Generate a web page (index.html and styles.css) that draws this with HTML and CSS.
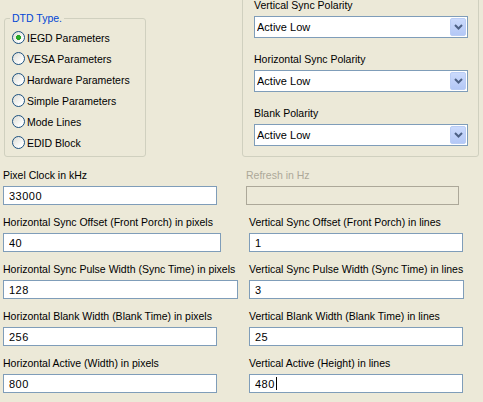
FILE: index.html
```html
<!DOCTYPE html>
<html lang="en">
<head>
  <meta charset="UTF-8">
  <title>DTD Settings</title>
  <link rel="stylesheet" href="styles.css">
</head>
<body>
  <div class="top">
    <fieldset class="group dtd">
      <legend>DTD Type.</legend>
      <label class="radio"><input type="radio" name="dtd" checked> IEGD Parameters</label>
      <label class="radio"><input type="radio" name="dtd"> VESA Parameters</label>
      <label class="radio"><input type="radio" name="dtd"> Hardware Parameters</label>
      <label class="radio"><input type="radio" name="dtd"> Simple Parameters</label>
      <label class="radio"><input type="radio" name="dtd"> Mode Lines</label>
      <label class="radio"><input type="radio" name="dtd"> EDID Block</label>
    </fieldset>

    <div class="group polarity">
      <div class="pick">
        <label>Vertical Sync Polarity</label>
        <div class="combo">
          <select><option>Active Low</option><option>Active High</option></select>
          <span class="drop"><svg width="9" height="6" viewBox="0 0 9 6"><path d="M1 1l3.5 3.5L8 1" fill="none" stroke="#4d6185" stroke-width="2"/></svg></span>
        </div>
      </div>
      <div class="pick">
        <label>Horizontal Sync Polarity</label>
        <div class="combo">
          <select><option>Active Low</option><option>Active High</option></select>
          <span class="drop"><svg width="9" height="6" viewBox="0 0 9 6"><path d="M1 1l3.5 3.5L8 1" fill="none" stroke="#4d6185" stroke-width="2"/></svg></span>
        </div>
      </div>
      <div class="pick">
        <label>Blank Polarity</label>
        <div class="combo">
          <select><option>Active Low</option><option>Active High</option></select>
          <span class="drop"><svg width="9" height="6" viewBox="0 0 9 6"><path d="M1 1l3.5 3.5L8 1" fill="none" stroke="#4d6185" stroke-width="2"/></svg></span>
        </div>
      </div>
    </div>
  </div>

  <div class="params">
    <div class="field">
      <label>Pixel Clock in kHz</label>
      <input type="text" class="w214" value="33000">
    </div>
    <div class="field off">
      <label>Refresh in Hz</label>
      <input type="text" class="w213" disabled>
    </div>

    <div class="field">
      <label>Horizontal Sync Offset (Front Porch) in pixels</label>
      <input type="text" class="w218" value="40">
    </div>
    <div class="field indent">
      <label>Vertical Sync Offset (Front Porch) in lines</label>
      <input type="text" class="w214" value="1">
    </div>

    <div class="field">
      <label>Horizontal Sync Pulse Width (Sync Time) in pixels</label>
      <input type="text" class="w235" value="128">
    </div>
    <div class="field indent">
      <label>Vertical Sync Pulse Width (Sync Time) in lines</label>
      <input type="text" class="w215" value="3">
    </div>

    <div class="field">
      <label>Horizontal Blank Width (Blank Time) in pixels</label>
      <input type="text" class="w214" value="256">
    </div>
    <div class="field indent">
      <label>Vertical Blank Width (Blank Time) in lines</label>
      <input type="text" class="w214" value="25">
    </div>

    <div class="field">
      <label>Horizontal Active (Width) in pixels</label>
      <input type="text" class="w214" value="800">
    </div>
    <div class="field indent">
      <label>Vertical Active (Height) in lines</label>
      <span class="caret-box">
        <input type="text" class="w214" value="480">
        <span class="caret"></span>
      </span>
    </div>
  </div>
</body>
</html>
```

FILE: styles.css
```css
body {
  margin: 0;
  background-color: #ece9d8;
  color: #000;
  font-family: "Liberation Sans", Arial, sans-serif;
  font-size: 10.5px;
  overflow: hidden;
}

.top {
  display: flex;
  align-items: flex-end;
  height: 157px;
}

.group {
  border: 1px solid #d0d0bf;
  border-radius: 3px;
  box-sizing: border-box;
}

/* radio group box */
.dtd {
  margin: 0 0 0 4px;
  width: 142px;
  padding: 3px 0 3px 7px;
}

.dtd legend {
  color: #0046d5;
  line-height: 12px;
  padding: 0 2px;
  margin-left: -2px;
}

.radio {
  display: flex;
  align-items: center;
  height: 21px;
  gap: 2px;
  white-space: nowrap;
}

.radio input {
  appearance: none;
  margin: 0;
  width: 13px;
  height: 13px;
  border: 1px solid #1c5180;
  border-radius: 50%;
  box-sizing: border-box;
  background: linear-gradient(135deg, #dcdcd4, #fff 80%);
}

.radio input:checked {
  background:
    radial-gradient(circle at 50% 50%, #2fb32f 0, #21a121 2.2px, transparent 2.8px),
    linear-gradient(135deg, #dcdcd4, #fff 80%);
}

/* polarity group box */
.polarity {
  margin-left: 96px;
  width: 237px;
  padding: 8px 10px 10px 11px;
}

.pick + .pick {
  margin-top: 14px;
}

.pick label {
  display: block;
  line-height: 14px;
  margin-bottom: 4px;
}

.combo {
  position: relative;
  width: 214px;
  height: 22px;
}

.combo select {
  appearance: none;
  width: 100%;
  height: 100%;
  margin: 0;
  border: 1px solid #7f9db9;
  background: #fff;
  padding: 0 0 0 2px;
  font: inherit;
  font-size: 11px;
  color: #000;
}

.drop {
  position: absolute;
  top: 2px;
  right: 2px;
  width: 16px;
  height: 18px;
  box-sizing: border-box;
  border: 1px solid #bacdf5;
  border-radius: 2px;
  background: linear-gradient(#cbdafc, #b4c8f6);
  display: flex;
  align-items: center;
  justify-content: center;
}

/* numeric fields */
.params {
  display: grid;
  grid-template-columns: 243px 1fr;
  padding-left: 3px;
  margin-top: 11px;
}

.field {
  height: 47px;
}

.field label {
  display: block;
  line-height: 14px;
  margin-bottom: 4px;
  white-space: nowrap;
}

.field.indent {
  margin-left: 3px;
}

.field input {
  display: block;
  height: 19px;
  box-sizing: border-box;
  margin: 0;
  border: 1px solid #7f9db9;
  background: #fff;
  padding: 0 5px;
  font: inherit;
  font-size: 11px;
  letter-spacing: 0.5px;
  color: #000;
  outline: none;
}

.field.off label {
  color: #aca899;
}

.field input:disabled {
  background: #ece9d8;
  border-color: #aca899;
}

.w213 { width: 213px; }
.w214 { width: 214px; }
.w215 { width: 215px; }
.w218 { width: 218px; }
.w235 { width: 235px; }

.caret-box {
  position: relative;
  display: block;
  width: 214px;
}

.caret {
  position: absolute;
  left: 27px;
  top: 3px;
  width: 1px;
  height: 13px;
  background: #000;
}
```
